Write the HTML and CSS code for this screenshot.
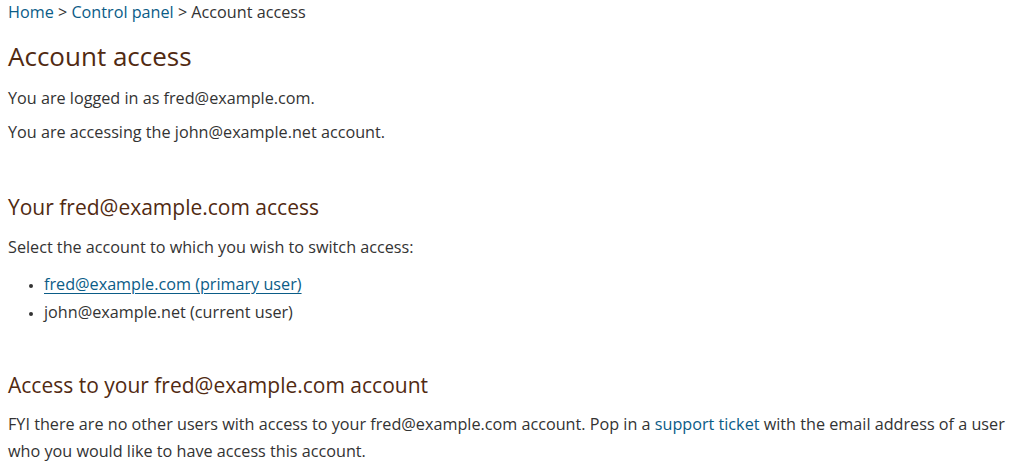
FILE: index.html
```html
<!DOCTYPE html>
<html lang="en">
<head>
  <meta charset="UTF-8">
  <meta name="viewport" content="width=device-width, initial-scale=1.0">
  <link rel="stylesheet" href="styles.css">
  <title>Account access</title>
</head>
<body>
  <div class="breadcrumb">
    <a href="#">Home</a> &gt; <a href="#">Control panel</a> &gt; Account access
  </div>

  <h1 class="page-title">Account access</h1>
  <p class="intro">You are logged in as fred@example.com.</p>
  <p class="intro">You are accessing the john@example.net account.</p>

  <h2 class="section-title">Your fred@example.com access</h2>
  <p class="text">Select the account to which you wish to switch access:</p>
  <ul class="account-list">
    <li><a href="#" class="underlined">fred@example.com (primary user)</a></li>
    <li>john@example.net (current user)</li>
  </ul>

  <h2 class="section-title section-last">Access to your fred@example.com account</h2>
  <p class="text">FYI there are no other users with access to your fred@example.com account. Pop in a <a href="#">support ticket</a> with the email address of a user who you would like to have access this account.</p>
</body>
</html>
```

FILE: styles.css
```css
body {
  margin: 0;
  padding: 0 8px;
  font-family: "Open Sans", "Noto Sans", sans-serif;
  font-size: 16.2px;
  color: #333333;
}

a {
  color: #0b5c87;
  text-decoration: none;
}

a.underlined {
  text-decoration: underline;
  text-underline-offset: 3px;
}

.breadcrumb {
  line-height: 24px;
}

.page-title {
  margin: 16px 0 13px;
  font-size: 26px;
  line-height: 32px;
  font-weight: normal;
  color: #512a12;
}

.intro {
  margin: 0 0 7px;
  line-height: 27px;
}

.section-title {
  margin: 47px 0 13px;
  font-size: 21px;
  line-height: 28px;
  font-weight: normal;
  color: #512a12;
}

.section-last {
  margin-top: 45px;
  margin-bottom: 12px;
}

.text {
  margin: 0;
  line-height: 27px;
}

.account-list {
  margin: 9px 0 0;
  padding-left: 36px;
}

.account-list li {
  line-height: 28px;
}

.account-list li::marker {
  font-size: 12px;
}
```
